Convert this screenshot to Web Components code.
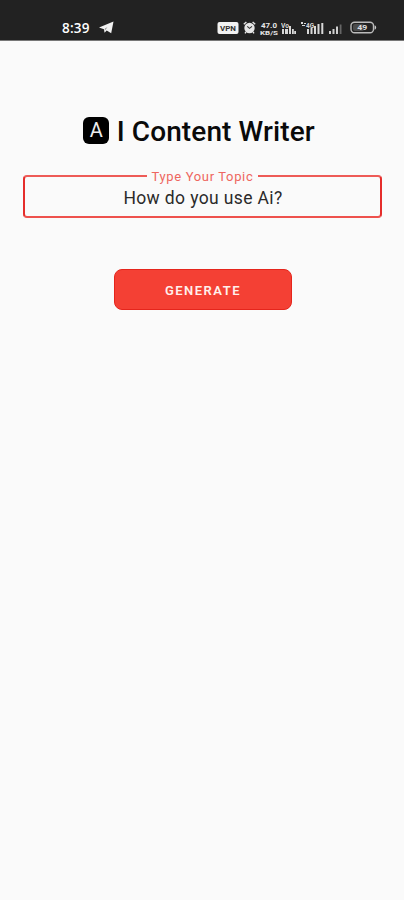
<!DOCTYPE html>
<html lang="en">
<head>
<meta charset="utf-8">
<title>AI Content Writer</title>
<style>
html,body{margin:0;height:100%;background:#fafafa;overflow:hidden;font-family:Roboto,"Liberation Sans",sans-serif}
</style>
</head>
<body>
<writer-app></writer-app>
<script>
const define = (name, html) => customElements.define(name, class extends HTMLElement {
  constructor() {
    super();
    this.attachShadow({ mode: 'open' }).innerHTML = html;
  }
});

define('status-icons', `
<style>
:host{display:flex;align-items:center;height:14px;color:#eee}
svg{display:block;flex:none}
text{font-family:Roboto,"Liberation Sans",sans-serif;font-weight:700}
.clock{margin-left:4px}.rate{margin-left:4px}.sim{margin-left:3px}.sig{margin-left:5px}.sig2{margin-left:5px}.bat{margin-left:8px}
</style>
<svg width="22" height="12" viewBox="0 0 22 12"><rect x=".5" width="21" height="12" rx="2" fill="#f2f2f2"/><text x="11" y="9" font-size="8" text-anchor="middle" textLength="16" lengthAdjust="spacingAndGlyphs" fill="#333">VPN</text></svg>
<svg class="clock" width="13" height="13" viewBox="0 0 13 13"><circle cx="6.5" cy="7" r="5.2" fill="#e6e6e6"/><path d="M.8 3.3 3.4 1M12.2 3.3 9.6 1M3 11l-1 1.4M10 11l1 1.4" stroke="#e6e6e6" stroke-width="1.4"/><path d="M4.3 5.4 6.5 7.4 9 5.4" fill="none" stroke="#333" stroke-width="1.1"/></svg>
<svg class="rate" width="18" height="14" viewBox="0 0 18 14" fill="#e6e6e6" overflow="visible"><text x="1" y="6.8" font-size="7.5" textLength="16" lengthAdjust="spacingAndGlyphs">47.0</text><text x="0" y="14" font-size="6" textLength="18" lengthAdjust="spacingAndGlyphs">KB/S</text></svg>
<svg class="sim" width="15" height="14" viewBox="0 0 15 14" fill="#d8d8d8"><text x="0" y="6.5" font-size="6.5" textLength="8" lengthAdjust="spacingAndGlyphs">Vo</text><path d="M1 8h2v5H1zM4 8h3v5H4zM8 5h2v8H8zM11 8h1.8v5H11zM13.2 10H15v3h-1.8z"/></svg>
<svg class="sig" width="23" height="14" viewBox="0 0 23 14" fill="#d8d8d8"><path d="M0 1h2v2H0zM3 2h2v1H3zM1 4h3v1H1z"/><text x="5" y="7" font-size="6.5" textLength="8" lengthAdjust="spacingAndGlyphs">4G</text><path d="M6 8h2v5H6zM9.5 7h2v6h-2zM13 5h2v8h-2zM16.5 3h2v10h-2zM20.3 2h2v11h-2z"/></svg>
<svg class="sig2" width="13" height="14" viewBox="0 0 13 14"><path d="M0 10h2v3H0zM3.5 8h2v5h-2zM7 5.5h2V13H7z" fill="#d0d0d0"/><path d="M10.7 3.5h1.8V13h-1.8z" fill="#666"/></svg>
<svg class="bat" width="27" height="13" viewBox="0 0 27 13"><rect x="1" y="1.2" width="22.5" height="10.6" rx="3.5" fill="none" stroke="#bbb" stroke-width="1.4"/><path d="M24.6 4.3q1.5.5 1.5 2.2t-1.5 2.2z" fill="#ccc"/><rect x="3" y="3" width="11" height="7" rx="2" fill="#4b4b4b"/><text x="12.2" y="9.3" font-size="7.5" text-anchor="middle" textLength="10" lengthAdjust="spacingAndGlyphs" fill="#ddd">49</text></svg>
`);

define('status-bar', `
<style>
:host{display:flex;align-items:center;justify-content:space-between;box-sizing:border-box;height:41px;padding:15px 27px 0 62px;background:#222;border-bottom:1px solid #777}
.left{display:flex;align-items:center;gap:9px;color:#fff}
time{font:600 13.5px/16px "Open Sans","Noto Sans",sans-serif;letter-spacing:.2px}
svg{display:block}
</style>
<div class="left"><time>8:39</time><svg width="15" height="13" viewBox="0 0 15 13"><path d="M0 6.5 14.5.5 12.2 12.2 7.7 9.5 5.5 11.7 5 8.2z" fill="#f1f1f1"/><path d="M5.6 8 8.5 6 6.2 9z" fill="#777"/></svg></div>
<status-icons></status-icons>
`);

define('app-title', `
<style>
:host{display:flex;align-items:center;justify-content:center;gap:7.5px;height:34px;color:#0a0a0a}
.tile{display:grid;place-items:center;width:26px;height:27px;border-radius:6px;background:#000;color:#eee;font:400 20px/27px Roboto,sans-serif;margin-top:-3px}
h1{margin:0;font:500 28px/34px Roboto,sans-serif;letter-spacing:.1px;white-space:nowrap}
</style>
<span class="tile">A</span><h1><slot></slot></h1>
`);

define('topic-field', `
<style>
:host{display:block}
fieldset{box-sizing:border-box;margin:0;min-width:0;height:50px;padding:0;border:2px solid #e52d2b;border-top-color:#ee5b57;border-bottom-color:#ee514d;border-radius:4px;text-align:center}
legend{margin:0 auto;padding:0 5px;color:#ee6660;font-size:13px;line-height:16px;letter-spacing:.65px}
legend slot{display:block;position:relative;top:1px}
.value{padding:1px 0 0 1px;color:#2a2a2a;font-size:17.5px;line-height:26px;letter-spacing:.37px}
</style>
<fieldset><legend><slot name="label"></slot></legend><div class="value"><slot></slot></div></fieldset>
`);

define('action-button', `
<style>
:host{display:block;width:178px}
button{display:block;box-sizing:border-box;width:100%;height:41px;padding:2px 0 0 1px;border:1px solid #e5251c;border-radius:8px;background:#f44034;color:#fff0ec;font:600 13px/37px Roboto,sans-serif;letter-spacing:1.5px}
</style>
<button type="button"><slot></slot></button>
`);

define('writer-app', `
<style>
:host{display:block;height:900px;background:#fafafa}
main{display:flex;flex-direction:column;align-items:center;padding:74px 22px 0 23px}
topic-field{align-self:stretch;margin-top:19px}
action-button{margin-top:51px}
app-title{margin-right:7px}
</style>
<status-bar></status-bar>
<main>
<app-title>I Content Writer</app-title>
<topic-field><span slot="label">Type Your Topic</span>How do you use Ai?</topic-field>
<action-button>GENERATE</action-button>
</main>
`);
</script>
</body>
</html>
